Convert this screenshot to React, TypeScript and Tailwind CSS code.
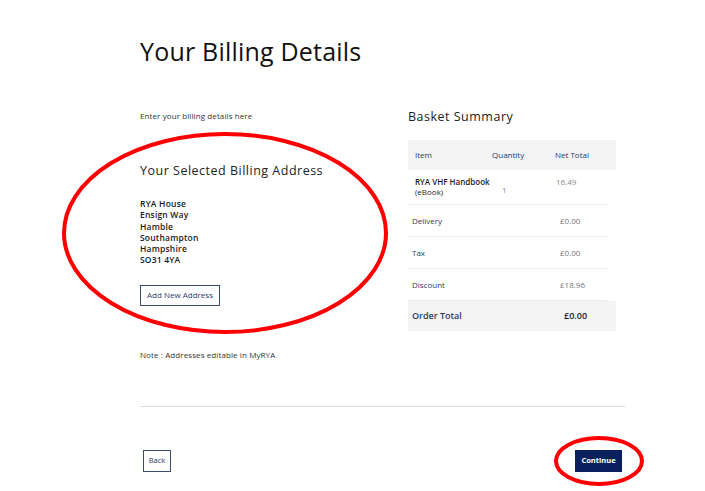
import React from "react";

const summaryRows = [
  { label: "Delivery", value: "£0.00" },
  { label: "Tax", value: "£0.00" },
  { label: "Discount", value: "£18.96" },
];

const address = ["RYA House", "Ensign Way", "Hamble", "Southampton", "Hampshire", "SO31 4YA"];

export default function App() {
  return (
    <div
      className="relative w-[705px] h-[491px] bg-white overflow-hidden text-[#1c1c1c]"
      style={{ fontFamily: "'Open Sans', 'Liberation Sans', sans-serif" }}
    >
      <div className="ml-[140px] w-[485px] pt-[34px]">
        <h1 className="text-[25px] leading-[34px] font-medium tracking-[0.2px] text-[#111]">Your Billing Details</h1>

        <div className="mt-[38px] flex">
          {/* left column */}
          <div className="w-[268px]">
            <p className="mt-[5px] text-[8px] leading-[10px] tracking-[0.1px] text-[#333]">Enter your billing details here</p>
            <h2 className="mt-[42px] text-[12.5px] leading-[16px] font-medium tracking-[0.5px] text-[#222]">
              Your Selected Billing Address
            </h2>
            <div className="mt-[19px] text-[8.5px] leading-[11.3px] font-semibold tracking-[0.2px] text-[#1a1a1a]">
              {address.map((l) => (
                <div key={l}>{l}</div>
              ))}
            </div>
            <button className="mt-[19px] h-[21px] w-[80px] border border-[#3c4a6b] text-[8px] font-medium text-[#2b3a67] flex items-center justify-center">
              Add New Address
            </button>
            <p className="mt-[44px] text-[8px] leading-[10px] tracking-[0.1px] text-[#333]">Note : Addresses editable in MyRYA</p>
          </div>

          {/* right column */}
          <div className="w-[208px]">
            <h2 className="mt-[3px] text-[12.5px] leading-[16px] font-medium tracking-[0.5px] text-[#222]">Basket Summary</h2>
            <div className="mt-[15px] text-[8px]">
              <div className="h-[30px] bg-[#f3f3f3] flex items-center font-medium text-[#2b3a67]">
                <span className="w-[84px] pl-[7px]">Item</span>
                <span className="w-[63px]">Quantity</span>
                <span>Net Total</span>
              </div>
              <div className="h-[35px] flex items-center border-b border-[#ececec] mr-[9px]">
                <span className="w-[84px] pl-[7px] font-semibold text-[#1c1c1c] leading-[10px]">
                  RYA VHF Handbook
                  <br />
                  <span className="font-medium">(eBook)</span>
                </span>
                <span className="w-[63px] pl-[10px] text-[#888] mt-[6px]">1</span>
                <span className="text-[#888] -mt-[10px] pl-[1px]">16.49</span>
              </div>
              {summaryRows.map((r) => (
                <div key={r.label} className="h-[32px] flex items-center border-b border-[#ececec] mr-[9px]">
                  <span className="w-[152px] pl-[4px] font-medium text-[#2b3a67]">{r.label}</span>
                  <span className="text-[#777]">{r.value}</span>
                </div>
              ))}
              <div className="h-[30px] bg-[#f3f3f3] flex items-center font-semibold text-[#2b3a67] text-[9px]">
                <span className="w-[156px] pl-[4px]">Order Total</span>
                <span className="text-[#1c1c1c]">£0.00</span>
              </div>
            </div>
          </div>
        </div>

        <div className="mt-[46px] border-t border-[#dcdcdc]" />

        <div className="mt-[43px] flex justify-between items-center">
          <button className="ml-[3px] h-[22px] w-[28px] border border-[#3c4a6b] text-[7.5px] font-medium text-[#2b3a67]">
            Back
          </button>
          <button className="mr-[3px] h-[22px] w-[47px] bg-[#0a1f5e] text-[7.5px] font-bold text-white">
            Continue
          </button>
        </div>
      </div>

      {/* red annotation rings */}
      <svg className="absolute left-0 top-0 pointer-events-none" width="705" height="491">
        <ellipse cx="225" cy="233" rx="161" ry="99" fill="none" stroke="#f00" strokeWidth="4" />
        <ellipse cx="599" cy="461" rx="43" ry="23" fill="none" stroke="#f00" strokeWidth="4" />
      </svg>
    </div>
  );
}
